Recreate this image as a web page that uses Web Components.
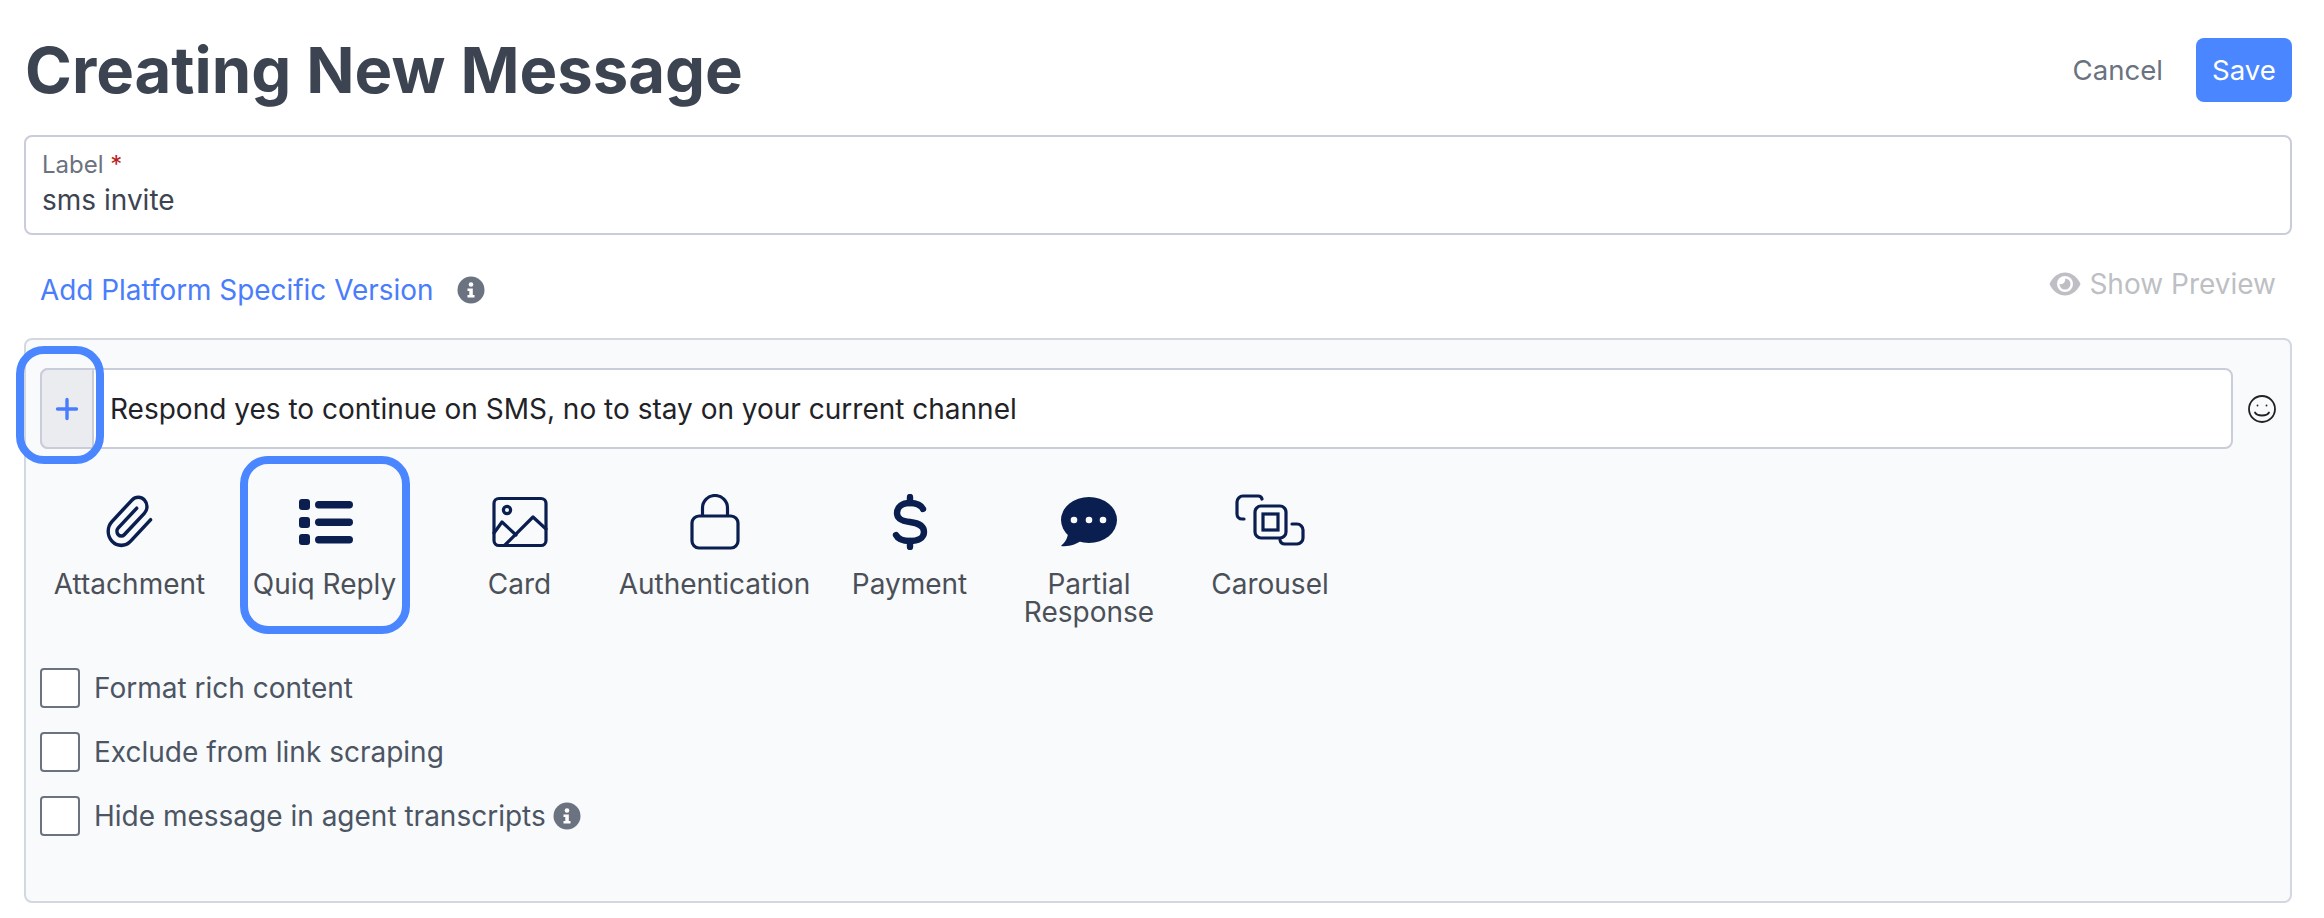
<!DOCTYPE html>
<html lang="en">
<head>
<meta charset="utf-8">
<title>Creating New Message</title>
<style>
  html, body { margin: 0; padding: 0; background: #fff; }
  body { font-family: Inter, "Liberation Sans", sans-serif; }
</style>
</head>
<body>
<message-page></message-page>

<script>
const NAVY = '#0a1f50';

const ICONS = {
  attachment: `<svg width="48" height="56" viewBox="1 0 22 24" preserveAspectRatio="none" fill="none" stroke="${NAVY}" stroke-width="1.55" stroke-linecap="round" stroke-linejoin="round"><path d="M21.44 11.05l-9.19 9.19a6 6 0 0 1-8.49-8.49l9.19-9.19a4 4 0 0 1 5.66 5.66l-9.2 9.19a2 2 0 0 1-2.83-2.83l8.49-8.48"/></svg>`,
  reply: `<svg width="56" height="56" viewBox="0 0 56 56" fill="${NAVY}"><rect x="2" y="5" width="11" height="11" rx="3"/><rect x="2" y="23" width="11" height="11" rx="3"/><rect x="2" y="40" width="11" height="11" rx="3"/><rect x="18" y="7" width="38" height="7.5" rx="3.7"/><rect x="18" y="24.500" width="38" height="7.5" rx="3.7"/><rect x="18" y="42" width="38" height="7.5" rx="3.7"/></svg>`,
  card: `<svg width="56" height="56" viewBox="0 0 56 56" fill="none" stroke="${NAVY}" stroke-width="3.2" stroke-linejoin="round" stroke-linecap="round"><rect x="2" y="4.500" width="52" height="47" rx="5"/><circle cx="15" cy="16" r="3.600"/><path d="M2 39 L10 28 L24 41"/><path d="M13 51 L41 23 L54 35"/></svg>`,
  lock: `<svg width="56" height="56" viewBox="0 0 56 56" fill="none" stroke="${NAVY}" stroke-width="3.2"><rect x="5" y="22" width="46" height="32" rx="7"/><path d="M15.500 22 V14 a12.500 12.500 0 0 1 25 0 V22"/></svg>`,
  payment: `<svg width="56" height="56" viewBox="0 0 56 56" fill="none" stroke="${NAVY}" stroke-width="6.400" stroke-linecap="round"><path d="M41 15 C39 11 34 9 28 9 C20 9 15 13 15 19 C15 25 20 27 28 28 C36 29 42 32 42 38 C42 44 36 47 28 47 C21 47 16 45 14 41"/><path d="M28 3 V9 M28 47 V53"/></svg>`,
  partial: `<svg width="56" height="56" viewBox="0 0 56 56" fill="${NAVY}"><ellipse cx="28" cy="26" rx="28" ry="23"/><path d="M7 40 C6 46 3 49 0 52 C8 53 16 50 21 46 Z"/><g fill="#f9fafc"><circle cx="13" cy="26" r="3.300"/><circle cx="28" cy="26" r="3.300"/><circle cx="42" cy="26" r="3.300"/></g></svg>`,
  carousel: `<svg width="70" height="56" viewBox="0 0 70 56" fill="none" stroke="${NAVY}" stroke-width="3.200" stroke-linecap="round"><path d="M27 5 a4 4 0 0 0 -4 -3 H8 a6 6 0 0 0 -6 6 V20 a5 5 0 0 0 5 5 H9"/><rect x="20" y="12" width="31" height="32" rx="6"/><rect x="28" y="20" width="15" height="16"/><path d="M57 30 H62 a6 6 0 0 1 6 6 V44 a6 6 0 0 1 -6 6 H50 a5 5 0 0 1 -5 -4"/></svg>`
};

class InfoIcon extends HTMLElement {
  constructor() {
    super();
    this.attachShadow({ mode: 'open' });
    this.shadowRoot.innerHTML = `
      <style>
        :host { display: inline-flex; width: 28px; height: 28px; }
        svg { display: block; }
      </style>
      <svg width="28" height="28" viewBox="0 0 28 28">
        <circle cx="14" cy="14" r="13.500" fill="#6b7280"/>
        <circle cx="14" cy="8.500" r="2.300" fill="#fff"/>
        <path d="M10.500 12.500 H15.800 V19 H17.500 V21.500 H10.500 V19 H12.300 V15 H10.500 Z" fill="#fff"/>
      </svg>`;
  }
}

class PageHeader extends HTMLElement {
  constructor() {
    super();
    this.attachShadow({ mode: 'open' });
    this.shadowRoot.innerHTML = `
      <style>
        :host { display: flex; align-items: center; justify-content: space-between; height: 64px; margin: 38px 0 33px; }
        h1 { margin: 0 0 0 1px; font-size: 63.4px; font-weight: 700; line-height: 64px; color: #3d4451; }
        .actions { display: flex; align-items: center; gap: 33px; }
        .cancel { font-size: 27.6px; color: #6b7280; }
        .save { width: 96px; height: 64px; box-sizing: border-box; border: 0; border-radius: 8px; background: #4a86ff; color: #fff; font: inherit; font-size: 27.6px; padding: 0; }
      </style>
      <h1><slot></slot></h1>
      <div class="actions">
        <span class="cancel">Cancel</span>
        <button class="save">Save</button>
      </div>`;
  }
}

class LabelField extends HTMLElement {
  constructor() {
    super();
    this.attachShadow({ mode: 'open' });
    this.shadowRoot.innerHTML = `
      <style>
        :host { display: block; height: 100px; box-sizing: border-box; border: 2px solid #c9cdd9; border-radius: 8px; padding: 14px 16px 0; background: #fff; }
        .label { font-size: 24px; line-height: 28px; color: #6b7280; }
        .label b { font-weight: 400; color: #b91c1c; }
        .value { font-size: 28px; line-height: 36px; margin-top: 3px; color: #3d4451; }
      </style>
      <div class="label">${this.getAttribute('label')} <b>*</b></div>
      <div class="value"><slot></slot></div>`;
  }
}

class LinkRow extends HTMLElement {
  constructor() {
    super();
    this.attachShadow({ mode: 'open' });
    this.shadowRoot.innerHTML = `
      <style>
        :host { display: flex; justify-content: space-between; height: 103px; padding: 0 16px 0 16px; }
        .left { display: flex; align-items: center; gap: 24px; height: 36px; margin-top: 37px; }
        .link { font-size: 27.9px; color: #4a7dfc; }
        .preview { display: flex; align-items: center; gap: 8px; height: 36px; margin-top: 31px; font-size: 28px; color: #bdbfc4; }
        svg { display: block; }
      </style>
      <div class="left"><span class="link">Add Platform Specific Version</span><info-icon></info-icon></div>
      <div class="preview">
        <svg width="32" height="26" viewBox="0 0 32 26">
          <path d="M0.500 13 C4 5.500 9.500 1.500 16 1.500 C22.500 1.500 28 5.500 31.500 13 C28 20.500 22.500 24.500 16 24.500 C9.500 24.500 4 20.500 0.500 13 Z" fill="#bdbfc4"/>
          <circle cx="16" cy="13" r="8" fill="#fff"/>
          <path d="M16 7.500 A5.500 5.500 0 1 1 10.500 13 C13.500 14 17 11 16 7.500 Z" fill="#bdbfc4"/>
        </svg>
        <span>Show Preview</span>
      </div>`;
  }
}

class ToolItem extends HTMLElement {
  constructor() {
    super();
    this.attachShadow({ mode: 'open' });
    const width = this.getAttribute('width') || 195;
    const ring = this.hasAttribute('highlight') ? '<div class="ring"></div>' : '';
    this.shadowRoot.innerHTML = `
      <style>
        :host { display: block; position: relative; flex: none; width: ${width}px; text-align: center; }
        .icon { display: flex; justify-content: center; height: 56px; margin-bottom: 20px; }
        .text { font-size: 28px; line-height: 28px; color: #4b5058; }
        .ring { position: absolute; left: 13px; right: 12px; top: -38px; bottom: 34px; border: 8px solid #4a86ff; border-radius: 28px; }
      </style>
      <div class="icon">${ICONS[this.getAttribute('icon')]}</div>
      <div class="text"><slot></slot></div>
      ${ring}`;
  }
}

class CheckRow extends HTMLElement {
  constructor() {
    super();
    this.attachShadow({ mode: 'open' });
    this.shadowRoot.innerHTML = `
      <style>
        :host { display: flex; align-items: center; height: 40px; gap: 14px; font-size: 28px; color: #4b5563; }
        .box { width: 40px; height: 40px; box-sizing: border-box; border: 2px solid #6b7280; border-radius: 4px; background: #fff; flex: none; }
        .extra { display: flex; margin-left: -7px; }
      </style>
      <div class="box"></div>
      <span><slot></slot></span>
      <span class="extra"><slot name="extra"></slot></span>`;
  }
}

class MessageInput extends HTMLElement {
  constructor() {
    super();
    this.attachShadow({ mode: 'open' });
    this.shadowRoot.innerHTML = `
      <style>
        :host { display: flex; align-items: center; gap: 14px; height: 81px; }
        .input { flex: 1; display: flex; align-items: stretch; height: 81px; box-sizing: border-box; border: 2px solid #c9cdd9; border-radius: 8px; background: #fff; }
        .plus { position: relative; width: 54px; margin: -2px 0 -2px -2px; box-sizing: border-box; flex: none; display: flex; align-items: center; justify-content: center; background: #ebecf0; border: 2px solid #c9cdd9; border-radius: 8px 0 0 8px; }
        .plus::after { content: ""; position: absolute; left: -26px; right: -12px; top: -24px; bottom: -17px; border: 8px solid #4a86ff; border-radius: 28px; }
        .text { display: flex; align-items: center; padding-left: 16px; font-size: 28px; color: #1f2328; }
        .smile { flex: none; display: block; }
      </style>
      <div class="input">
        <div class="plus">
          <svg width="24" height="24" viewBox="0 0 24 24" stroke="#4a7dfc" stroke-width="3.400" stroke-linecap="round"><path d="M12 2.500 V21.500 M2.500 12 H21.500"/></svg>
        </div>
        <div class="text"><slot></slot></div>
      </div>
      <svg class="smile" width="30" height="30" viewBox="0 0 30 30" fill="none" stroke="#222" stroke-width="1.800">
        <circle cx="15" cy="15" r="13"/>
        <circle cx="10.500" cy="11.500" r="0.900" fill="#222" stroke="none"/>
        <circle cx="19.500" cy="11.500" r="0.900" fill="#222" stroke="none"/>
        <path d="M8 18.500 C10 22.500 20 22.500 22 18.500" stroke-linecap="round"/>
      </svg>`;
  }
}

class MessageEditor extends HTMLElement {
  constructor() {
    super();
    this.attachShadow({ mode: 'open' });
    this.shadowRoot.innerHTML = `
      <style>
        :host { display: block; height: 565px; box-sizing: border-box; border: 2px solid #d3d7e0; border-radius: 8px; background: #f9fafc; padding: 28px 13px 0 14px; }
        .tools { display: flex; height: 174px; margin: 45px 0 0 -8px; }
        .checks { display: flex; flex-direction: column; gap: 24px; }
      </style>
      <slot name="input"></slot>
      <div class="tools"><slot name="tool"></slot></div>
      <div class="checks"><slot name="check"></slot></div>`;
  }
}

class MessagePage extends HTMLElement {
  constructor() {
    super();
    this.attachShadow({ mode: 'open' });
    this.shadowRoot.innerHTML = `
      <style>
        :host { display: block; padding: 0 32px 0 24px; font-family: Inter, "Liberation Sans", sans-serif; }
      </style>
      <page-header>Creating New Message</page-header>
      <label-field label="Label">sms invite</label-field>
      <link-row></link-row>
      <message-editor>
        <message-input slot="input">Respond yes to continue on SMS, no to stay on your current channel</message-input>
        <tool-item slot="tool" icon="attachment">Attachment</tool-item>
        <tool-item slot="tool" icon="reply" highlight>Quiq Reply</tool-item>
        <tool-item slot="tool" icon="card">Card</tool-item>
        <tool-item slot="tool" icon="lock">Authentication</tool-item>
        <tool-item slot="tool" icon="payment">Payment</tool-item>
        <tool-item slot="tool" icon="partial" width="164">Partial<br>Response</tool-item>
        <tool-item slot="tool" icon="carousel" width="198">Carousel</tool-item>
        <check-row slot="check">Format rich content</check-row>
        <check-row slot="check">Exclude from link scraping</check-row>
        <check-row slot="check">Hide message in agent transcripts<info-icon slot="extra"></info-icon></check-row>
      </message-editor>`;
  }
}

customElements.define('info-icon', InfoIcon);
customElements.define('page-header', PageHeader);
customElements.define('label-field', LabelField);
customElements.define('link-row', LinkRow);
customElements.define('tool-item', ToolItem);
customElements.define('check-row', CheckRow);
customElements.define('message-input', MessageInput);
customElements.define('message-editor', MessageEditor);
customElements.define('message-page', MessagePage);
</script>
</body>
</html>
